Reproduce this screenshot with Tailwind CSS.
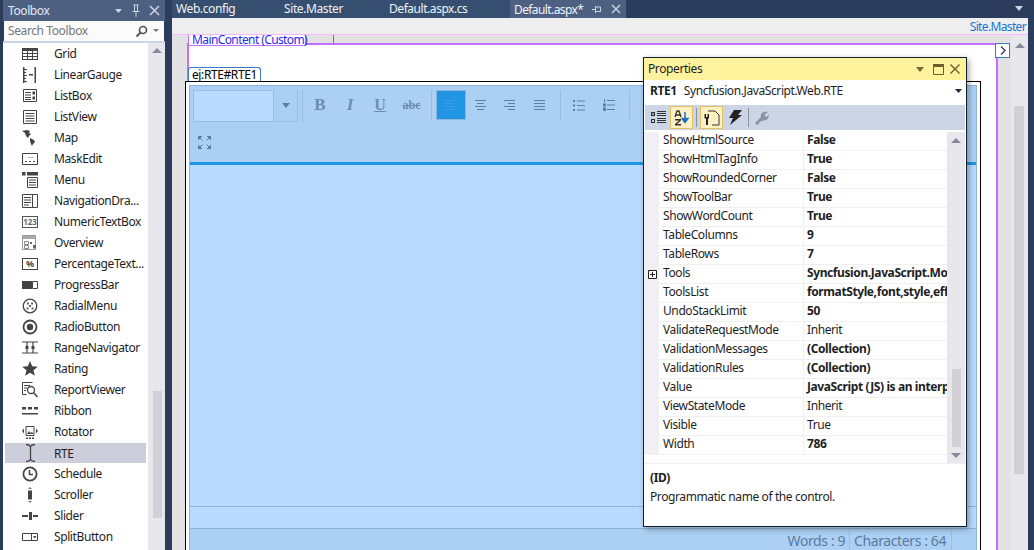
<!DOCTYPE html>
<html>
<head>
<meta charset="utf-8">
<script src="https://cdn.jsdelivr.net/npm/@tailwindcss/browser@4"></script>
</head>
<body class="m-0 w-[1034px] h-[550px] overflow-hidden bg-[#2b3c5c] font-['Noto_Sans',sans-serif] text-[12px] tracking-[-0.4px] text-[#1e1e1e]">
<div class="flex w-[1034px] h-[550px] relative">

  <!-- Toolbox -->
  <aside class="w-[162px] ml-[3px] h-full flex flex-col shrink-0">
    <div class="h-[21px] bg-[#4d6082] flex items-center pl-[5px] pr-[5px] text-[#e6eaf2]">
      <span class="flex-1 text-[12px]">Toolbox</span>
      <svg width="10" height="6" viewBox="0 0 10 6" class="mr-[7px]"><path d="M1 1h7L4.500 5z" fill="#ced4e2"/></svg>
      <svg width="10" height="14" viewBox="0 0 10 14" class="mr-[8px]"><path d="M2.500 1h5M3.500 1v6M6.500 1v6M1.500 7.500h7M5 8v5" stroke="#ced4e2" fill="none"/></svg>
      <svg width="11" height="11" viewBox="0 0 11 11"><path d="M1 1l9 9M10 1l-9 9" stroke="#ced4e2" stroke-width="1.500"/></svg>
    </div>
    <div class="h-[20px] ml-[1px] mr-[1px] bg-[#fbfbfc] flex items-center pl-[4px] pr-[4px] text-[#777]">
      <span class="flex-1 text-[12px]">Search Toolbox</span>
      <svg width="13" height="13" viewBox="0 0 13 13"><circle cx="8" cy="5" r="3.500" fill="none" stroke="#555" stroke-width="1.700"/><path d="M5.500 7.500L1.500 11.500" stroke="#555" stroke-width="2"/></svg>
      <svg width="7" height="4" viewBox="0 0 7 4" class="ml-[5px]"><path d="M0 0h6L3 3z" fill="#777"/></svg>
    </div>
    <div class="h-[2px] bg-[#ccd5e7]"></div>
    <div class="flex-1 flex bg-white overflow-hidden">
      <div class="w-[145px] pl-[1px] leading-[21px]">
        <div class="h-[21px] flex items-center"><svg class="w-[16px] h-[12px] ml-[18px] mr-[16px] shrink-0" viewBox="0 0 16 12"><path d="M0 0h16v12H0z" fill="#444"/><path d="M1 3h4v2H1zM6 3h4v2H6zM11 3h4v2h-4zM1 6h4v2H1zM6 6h4v2H6zM11 6h4v2h-4zM1 9h4v2H1zM6 9h4v2H6zM11 9h4v2h-4z" fill="#fff"/></svg>Grid</div>
        <div class="h-[21px] flex items-center"><svg class="w-[16px] h-[16px] ml-[18px] mr-[16px] shrink-0" viewBox="0 0 16 16"><path d="M1 0h1.500v16H1zM2 2h3v1H2zM2 5h2v1H2zM2 8h3v1H2zM2 11h2v1H2zM2 14h3v1H2zM7 7h4v1.500H7zM12.500 0H14v16h-1.500z" fill="#444"/></svg>LinearGauge</div>
        <div class="h-[21px] flex items-center"><svg class="w-[14px] h-[13px] ml-[19px] mr-[17px] shrink-0" viewBox="0 0 14 13"><path d="M.5.500h13v12H.5z" fill="none" stroke="#444"/><path d="M2 3h6v1H2zM2 5.500h6v1H2zM2 8h6v1H2zM2 10h6v1H2zM9.500 2.500H12v3H9.500zM9.500 7.500H12v3H9.500z" fill="#444"/></svg>ListBox</div>
        <div class="h-[21px] flex items-center"><svg class="w-[14px] h-[14px] ml-[19px] mr-[17px] shrink-0" viewBox="0 0 14 14"><path d="M.5.500h13v13H.5z" fill="none" stroke="#444"/><path d="M2.500 3h9v1h-9zM2.500 5.500h9v1h-9zM2.500 8h9v1h-9zM2.500 10.500h9v1h-9z" fill="#444"/></svg>ListView</div>
        <div class="h-[21px] flex items-center"><svg class="w-[16px] h-[16px] ml-[18px] mr-[16px] shrink-0" viewBox="0 0 16 16"><path d="M0 1l5-1 3 1-1 2 2 1-2 2-1 2-2-2-1-3zM8 8l4 2 1 2-2 2-1 2-1-2-1-3z" fill="#444"/></svg>Map</div>
        <div class="h-[21px] flex items-center"><svg class="w-[16px] h-[12px] ml-[18px] mr-[16px] shrink-0" viewBox="0 0 16 12"><path d="M.5.500h15v11H.5z" fill="none" stroke="#444"/><path d="M3 8h2v1H3zM7 8h2v1H7zM11 8h2v1h-2zM6.500 4h1v1h-1zM9.500 4h1v1h-1z" fill="#444"/></svg>MaskEdit</div>
        <div class="h-[21px] flex items-center"><svg class="w-[16px] h-[16px] ml-[18px] mr-[16px] shrink-0" viewBox="0 0 16 16"><path d="M0 0h3.500v3.500H0zM5 0h11v3.500H5z" fill="#444"/><path d="M5.500 5.500h10v10h-10z" fill="none" stroke="#444"/><path d="M7 7.500h7v1H7zM7 10h7v1H7zM7 12.500h7v1H7z" fill="#444"/></svg>Menu</div>
        <div class="h-[21px] flex items-center"><svg class="w-[16px] h-[14px] ml-[18px] mr-[16px] shrink-0" viewBox="0 0 16 14"><path d="M.5.500h15v13H.5zM10.500.500v13" fill="none" stroke="#444"/><path d="M2 3h7v1H2zM2 5.500h7v1H2zM2 8h7v1H2zM2 10.500h5v1H2z" fill="#444"/></svg>NavigationDra...</div>
        <div class="h-[21px] flex items-center"><span class="w-[16px] h-[12px] ml-[18px] mr-[16px] shrink-0 border border-[#555] flex items-center justify-center text-[8px] leading-[10px] font-bold tracking-normal text-[#666]">123</span>NumericTextBox</div>
        <div class="h-[21px] flex items-center"><svg class="w-[16px] h-[16px] ml-[18px] mr-[16px] shrink-0" viewBox="0 0 16 16"><path d="M.5.500h13v14H.5z" fill="none" stroke="#999"/><path d="M1 1h12v3H1z" fill="#aaa"/><path d="M2.500 6.500h4v3h-4zM2.500 10.500h4v3h-4z" fill="none" stroke="#888"/><path d="M8 7h2v2H8zM11 10h3v3.500h-3z" fill="#666"/></svg>Overview</div>
        <div class="h-[21px] flex items-center"><span class="w-[16px] h-[12px] ml-[18px] mr-[16px] shrink-0 border border-[#444] flex items-center justify-center text-[9px] leading-[10px] font-bold tracking-normal text-[#444]">%</span>PercentageText...</div>
        <div class="h-[21px] flex items-center"><svg class="w-[16px] h-[8px] ml-[18px] mr-[16px] shrink-0" viewBox="0 0 16 8"><path d="M0 0h10v8H0z" fill="#444"/><path d="M10.500.500h5v7h-5z" fill="none" stroke="#444"/></svg>ProgressBar</div>
        <div class="h-[21px] flex items-center"><svg class="w-[16px] h-[16px] ml-[18px] mr-[16px] shrink-0" viewBox="0 0 16 16"><circle cx="8" cy="8" r="6.800" fill="none" stroke="#444" stroke-width="1.300"/><path d="M5 4.500h2v2H5zM9 4.500h2v2H9zM7 7h2v2H7zM4.500 9.500h2v2h-2zM9.500 9.500h2v2h-2z" fill="#666"/></svg>RadialMenu</div>
        <div class="h-[21px] flex items-center"><svg class="w-[16px] h-[16px] ml-[18px] mr-[16px] shrink-0" viewBox="0 0 16 16"><circle cx="8" cy="8" r="6.500" fill="none" stroke="#444" stroke-width="1.800"/><circle cx="8" cy="8" r="3.200" fill="#444"/></svg>RadioButton</div>
        <div class="h-[21px] flex items-center"><svg class="w-[16px] h-[13px] ml-[18px] mr-[16px] shrink-0" viewBox="0 0 16 13"><path d="M0 1h16M0 12h16M5 1v11M11 1v11" stroke="#444" fill="none" stroke-width="1.200"/><path d="M3.500 5h3v3h-3zM9.500 5h3v3h-3z" fill="#444"/></svg>RangeNavigator</div>
        <div class="h-[21px] flex items-center"><svg class="w-[16px] h-[15px] ml-[18px] mr-[16px] shrink-0" viewBox="0 0 16 15"><path d="M8 0l2.200 5.300 5.600.4-4.300 3.600 1.400 5.500L8 11.800 3.100 14.800l1.400-5.500L.2 5.700l5.600-.4z" fill="#444"/></svg>Rating</div>
        <div class="h-[21px] flex items-center"><svg class="w-[16px] h-[16px] ml-[18px] mr-[16px] shrink-0" viewBox="0 0 16 16"><path d="M.5.500h10M.5.500v12h4" fill="none" stroke="#444"/><path d="M2 3h6v1H2zM2 5.500h3v1H2zM2 8h2v1H2z" fill="#444"/><circle cx="9" cy="8" r="3.500" fill="none" stroke="#444" stroke-width="1.300"/><path d="M11.500 10.500l4 4.500" stroke="#444" stroke-width="1.500"/></svg>ReportViewer</div>
        <div class="h-[21px] flex items-center"><svg class="w-[16px] h-[8px] ml-[18px] mr-[16px] shrink-0" viewBox="0 0 16 8"><path d="M0 0h4v2.500H0zM6 0h4v2.500H6zM12 0h4v2.500h-4zM0 6h16v1.500H0z" fill="#444"/></svg>Ribbon</div>
        <div class="h-[21px] flex items-center"><svg class="w-[16px] h-[16px] ml-[18px] mr-[16px] shrink-0" viewBox="0 0 16 16"><path d="M4 2.500h8v9H4z" fill="none" stroke="#444"/><path d="M5 10l2-3 1.500 2 1.500-1 1.500 2zM0 7l2-2.500v5zM16 7l-2-2.500v5zM4 13.500h2V15H4zM7 13.500h2V15H7zM10 13.500h2V15h-2z" fill="#444"/></svg>Rotator</div>
        <div class="h-[20px] mt-[1px] ml-[1px] w-[141px] bg-[#cccedb] flex items-center"><svg class="w-[9px] h-[18px] ml-[21px] mr-[19px] shrink-0" viewBox="0 0 9 18"><path d="M0 .500c2 0 3.500.5 4.500 2C5.500 1 7 .500 9 .500M4.500 2.500v13M0 17.500c2 0 3.500-.5 4.500-2 1 1.500 2.500 2 4.500 2" fill="none" stroke="#444" stroke-width="1.300"/></svg>RTE</div>
        <div class="h-[21px] flex items-center"><svg class="w-[16px] h-[16px] ml-[18px] mr-[16px] shrink-0" viewBox="0 0 16 16"><circle cx="8" cy="8" r="6.600" fill="none" stroke="#444" stroke-width="1.800"/><path d="M7.500 4v4.500H11" fill="none" stroke="#444" stroke-width="1.500"/></svg>Schedule</div>
        <div class="h-[21px] flex items-center"><svg class="w-[6px] h-[16px] ml-[23px] mr-[21px] shrink-0" viewBox="0 0 6 16"><path d="M3 0l2 2H1zM3 16l2-2H1z" fill="#777"/><path d="M1 3.500h4v9H1z" fill="#444"/></svg>Scroller</div>
        <div class="h-[21px] flex items-center"><svg class="w-[16px] h-[8px] ml-[18px] mr-[16px] shrink-0" viewBox="0 0 16 8"><path d="M0 3h6v2H0zM11 3h5v2h-5zM7 0h3v8H7z" fill="#444"/></svg>Slider</div>
        <div class="h-[21px] flex items-center"><svg class="w-[16px] h-[8px] ml-[18px] mr-[16px] shrink-0" viewBox="0 0 16 8"><path d="M.5.500h15v7H.5zM9.500.500v7" fill="none" stroke="#444"/><path d="M11 3h3.500l-1.750 2.500z" fill="#444"/></svg>SplitButton</div>
      </div>
      <div class="flex-1 bg-[#e8e8ec] relative flex flex-col items-center">
        <svg width="10" height="6" viewBox="0 0 10 6" class="mt-[5px]"><path d="M5 0l5 5H0z" fill="#868999"/></svg>
        <div class="absolute top-[348px] left-[5px] w-[9px] h-[127px] bg-[#d0d0d6]"></div>
      </div>
    </div>
  </aside>

  <div class="w-[7px] shrink-0"></div>

  <!-- Document well -->
  <main class="w-[856px] h-full shrink-0 flex flex-col">
    <div class="h-[18px] flex items-center text-[#f0f3f8] text-[12px]">
      <div class="w-[111px] h-full pl-[4px] bg-[#364e6f] leading-[17px]">Web.config</div>
      <div class="w-[106px] h-full pl-[1px] bg-[#364e6f] leading-[17px]">Site.Master</div>
      <div class="w-[121px] h-full bg-[#364e6f] leading-[17px] tracking-[-0.45px]">Default.aspx.cs</div>
      <div class="w-[116px] h-full pl-[4px] bg-[#4d6082] leading-[17px] flex items-center tracking-[-0.6px]">Default.aspx*
        <svg width="10" height="9" viewBox="0 0 10 9" class="ml-[9px]"><path d="M0 4.500h3M3.500 1v7M3.500 2h5v4.500h-5" stroke="#ced4e2" fill="none"/></svg>
        <svg width="10" height="10" viewBox="0 0 10 10" class="ml-[9px]"><path d="M1 1l8 8M9 1l-8 8" stroke="#ced4e2" stroke-width="1.400"/></svg>
      </div>
      <div class="flex-1 flex justify-end pr-[4px]"><svg width="10" height="6" viewBox="0 0 10 6"><path d="M2 0h8L6 5z" fill="#ced4e2" transform="translate(-1 0)"/></svg></div>
    </div>
    <div class="h-[16px] bg-[#eeeeee] text-right text-[#1b74d0] pr-[2px] leading-[17px] tracking-[-0.65px]">Site.Master</div>
    <div class="h-[1px] bg-[#f7b9ff]"></div>
    <div class="flex-1 flex min-h-0">
      <!-- Design surface -->
      <div class="w-[839px] bg-[#e2e2e2] relative overflow-hidden">
        <div class="h-[8px] relative">
          <div class="absolute left-[161px] top-0 h-[9px] w-[1px] bg-[#777]"></div>
        </div>
        <div class="ml-[15px] w-[811px] h-[520px] border-l-[2px] border-r-[2px] border-t-[2px] border-[#c16fff] bg-white relative">
          <div class="h-[22px]"></div>
          <div class="w-[73px] h-[14px] -ml-[1px] bg-white border border-b-0 border-[#3a78c8] rounded-t-[3px] text-black text-[12px] leading-[13px] pl-[3px]">ej:RTE#RTE1</div>
          <div class="-ml-[4px] w-[796px] h-[490px] border border-black bg-white pl-[3px] pt-[3px] pr-[3px]">
            <div class="border border-[#8fb4dc] h-full flex flex-col">
              <!-- RTE toolbar -->
              <div class="h-[76px] bg-[#acd0f3] flex flex-col shrink-0">
                <div class="flex items-start pt-[4px] pl-[3px] h-[41px]">
                  <div class="w-[81px] h-[32px] bg-[#b9dbff] border border-[#9cbde0]"></div>
                  <div class="w-[24px] h-[32px] flex items-center justify-center border-b border-r border-[#9cbde0]"><svg width="8" height="5" viewBox="0 0 8 5"><path d="M0 0h8L4 5z" fill="#5e7fa6"/></svg></div>
                  <div class="w-[1px] h-[32px] bg-[#9cbde0] ml-[4px]"></div>
                  <div class="w-[30px] h-[30px] ml-[2px] flex items-center justify-center font-['Liberation_Serif',serif] font-bold text-[17px] tracking-normal text-[#6d8db0]">B</div>
                  <div class="w-[30px] h-[30px] flex items-center justify-center font-['Liberation_Serif',serif] italic font-bold text-[17px] tracking-normal text-[#6d8db0]">I</div>
                  <div class="w-[30px] h-[30px] flex items-center justify-center font-['Liberation_Serif',serif] underline font-bold text-[16px] tracking-normal text-[#6d8db0]">U</div>
                  <div class="w-[33px] h-[30px] flex items-center justify-center font-['Liberation_Serif',serif] line-through font-bold text-[12px] tracking-normal text-[#6d8db0]">abc</div>
                  <div class="w-[1px] h-[30px] bg-[#9cbde0] ml-[3px]"></div>
                  <div class="w-[30px] h-[30px] ml-[4px] bg-[#1f95e3] border border-[#8fb4dc] flex items-center justify-center"><svg width="12" height="11" viewBox="0 0 12 11"><path d="M0 .500h12M0 3.500h8M0 6.500h12M0 9.500h8" stroke="#3d9de4"/></svg></div>
                  <div class="w-[28px] h-[30px] flex items-center justify-center"><svg width="11" height="11" viewBox="0 0 11 11"><path d="M0 .500h11M2 3.500h7M0 6.500h11M2 9.500h7" stroke="#5e7fa6"/></svg></div>
                  <div class="w-[30px] h-[30px] flex items-center justify-center"><svg width="11" height="11" viewBox="0 0 11 11"><path d="M0 .500h11M4 3.500h7M0 6.500h11M4 9.500h7" stroke="#5e7fa6"/></svg></div>
                  <div class="w-[30px] h-[30px] flex items-center justify-center"><svg width="11" height="11" viewBox="0 0 11 11"><path d="M0 .500h11M0 3.500h11M0 6.500h11M0 9.500h11" stroke="#5e7fa6"/></svg></div>
                  <div class="w-[1px] h-[30px] bg-[#9cbde0] ml-[6px]"></div>
                  <div class="w-[30px] h-[30px] ml-[3px] flex items-center justify-center"><svg width="12" height="11" viewBox="0 0 12 11"><path d="M0 0h2v2H0zM0 4.500h2v2H0zM0 9h2v2H0z" fill="#5e7fa6"/><path d="M4 1h8M4 5.500h8M4 10h8" stroke="#5e7fa6"/></svg></div>
                  <div class="w-[30px] h-[30px] flex items-center justify-center"><svg width="12" height="12" viewBox="0 0 12 12"><path d="M1 0h1v3.500H1zM0 4.500h3v3H0zM0 8.500h3V12H0z" fill="#5e7fa6"/><path d="M4 1.500h8M4 6h8M4 10.500h8" stroke="#5e7fa6"/></svg></div>
                  <div class="w-[1px] h-[30px] bg-[#9cbde0] ml-[5px]"></div>
                </div>
                <div class="pl-[8px] pt-[9px]"><svg width="13" height="13" viewBox="0 0 13 13"><path d="M0 0h4L0 4zM13 0H9l4 4zM0 13h4l-4-4zM13 13H9l4-4zM2 2l2.500 2.500M11 2L8.500 4.500M2 11l2.500-2.500M11 11L8.500 8.500" fill="#5e7fa6" stroke="#5e7fa6"/></svg></div>
              </div>
              <div class="h-[3px] bg-[#1f95e3] shrink-0"></div>
              <div class="h-[342px] bg-[#b9dbff] border-b border-[#8fb4dc] shrink-0"></div>
              <div class="h-[22px] bg-[#b9dbff] border-b border-[#8fb4dc] shrink-0"></div>
              <div class="h-[22px] shrink-0 bg-[#acd0f3] flex justify-end items-center text-[14px] text-[#5c7a9e] pr-[24px]">
                <span>Words : 9</span>
                <span class="w-[1px] h-[20px] bg-[#9cbde0] mx-[4px]"></span>
                <span>Characters : 64</span>
                <span class="w-[1px] h-[20px] bg-[#9cbde0] ml-[5px]"></span>
              </div>
            </div>
          </div>
        </div>
        <!-- MainContent tab -->
        <div class="absolute left-[16px] top-0 w-[118px] h-[11px] bg-white border border-t-0 border-[#c16fff] text-[#2a2af0] text-[12px] leading-[9px] pl-[3px] whitespace-nowrap tracking-[-0.6px]">MainContent (Custom)</div>
        <!-- Chevron -->
        <div class="absolute left-[823px] top-[8px] w-[15px] h-[15px] bg-white border border-[#3a78c8] flex items-center justify-center"><svg width="6" height="9" viewBox="0 0 6 9"><path d="M1 .500l4 4-4 4" fill="none" stroke="#2b3c5c" stroke-width="1.300"/></svg></div>
      </div>
      <!-- Main scrollbar -->
      <div class="flex-1 bg-[#e8e8ec] relative flex flex-col items-center">
        <svg width="10" height="6" viewBox="0 0 10 6" class="mt-[8px]"><path d="M5 0l5 5H0z" fill="#868999"/></svg>
        <div class="absolute top-[71px] left-[3px] w-[10px] h-[368px] bg-[#d0d0d6]"></div>
      </div>
    </div>
  </main>

  <!-- Properties floating window -->
  <section class="absolute left-[643px] top-[57px] w-[324px] h-[470px] border border-[#10202e] bg-white shadow-[2px_2px_6px_rgba(0,0,0,0.35)] flex flex-col">
    <div class="h-[22px] bg-[#fff29d] flex items-center pl-[4px] pr-[6px] shrink-0">
      <span class="flex-1">Properties</span>
      <svg width="9" height="5" viewBox="0 0 9 5" class="mr-[8px]"><path d="M0 0h8L4 5z" fill="#7a6a3a"/></svg>
      <svg width="11" height="11" viewBox="0 0 11 11" class="mr-[6px]"><path d="M.5 2.500h10v8H.5z" fill="none" stroke="#6b5c30"/><path d="M0 0h11v2.500H0z" fill="#6b5c30"/></svg>
      <svg width="10" height="10" viewBox="0 0 10 10"><path d="M.5.500l9 9M9.500.500l-9 9" stroke="#6b5c30" stroke-width="1.400"/></svg>
    </div>
    <div class="h-[25px] flex items-center pl-[6px] pr-[4px] pb-[3px] shrink-0 text-[12px]">
      <span class="font-bold mr-[7px]">RTE1</span><span class="flex-1">Syncfusion.JavaScript.Web.RTE</span>
      <svg width="7" height="4" viewBox="0 0 7 4"><path d="M0 0h7L3.500 4z" fill="#1e2a44"/></svg>
    </div>
    <div class="h-[25px] mx-[1px] bg-[#ccd5e5] flex items-center shrink-0">
      <div class="w-[25px] flex justify-center pl-[2px]"><svg width="15" height="13" viewBox="0 0 15 13"><path d="M0 1h4v4H0zM0 8h4v4H0z" fill="#333"/><path d="M1 3h2M1 10h2M2 9v2" stroke="#fff"/><path d="M6 .500h9M6 2.500h9M6 4.500h9M6 7.500h9M6 9.500h9M6 11.500h9" stroke="#333"/></svg></div>
      <div class="w-[23px] h-[23px] bg-[#fdf0c2] border border-[#e5c365] flex items-center justify-center"><svg width="16" height="16" viewBox="0 0 16 16"><path d="M1 7L3 1h2l2 6M2 5h4" fill="none" stroke="#333" stroke-width="1.300"/><path d="M1 9h6v1.500L3 14h4v1.500H1V14l4-3.500H1z" fill="#333"/><path d="M11 2v9M8 8.500l3 4 3-4z" fill="#1f6fc4" stroke="#1f6fc4" stroke-width="1.500"/></svg></div>
      <div class="w-[1px] h-[19px] bg-[#8c93a3] mx-[3px]"></div>
      <div class="w-[23px] h-[23px] bg-[#fdf0c2] border border-[#e5c365] flex items-center justify-center"><svg width="16" height="16" viewBox="0 0 16 16"><path d="M4 1h7l4 4v10H8" fill="none" stroke="#333"/><path d="M2 4v3h1.500V4H5v4L4 9v6H2V9L.5 8V4z" fill="#222"/></svg></div>
      <div class="w-[20px] flex justify-center ml-[2px]"><svg width="13" height="15" viewBox="0 0 13 15"><path d="M5 0h8L9 5h4L1 15l3-7H0z" fill="#222"/></svg></div>
      <div class="w-[1px] h-[19px] bg-[#8c93a3] mx-[3px]"></div>
      <div class="w-[20px] flex justify-center"><svg width="14" height="14" viewBox="0 0 14 14"><path d="M0 12l6-6C5 3 8 0 13 1L9.500 3.500 11 6l3-2c0 4-4 6.500-7 5.500L2 14z" fill="#8c93a3"/></svg></div>
    </div>
    <div class="h-[2px] shrink-0"></div>
    <!-- Property grid -->
    <div class="h-[332px] flex shrink-0 border-b border-[#f0f0f0] ">
      <div class="w-[303px] flex flex-col">
        <div class="flex h-[19px] shrink-0 leading-[15px]"><span class="w-[15px] bg-[#f0f0f4] shrink-0"></span><span class="w-[145px] pl-[4px] border-r border-b border-[#f0f0f0]">ShowHtmlSource</span><span class="flex-1 pl-[3px] font-bold border-b border-[#f0f0f0] overflow-hidden whitespace-nowrap">False</span></div>
        <div class="flex h-[19px] shrink-0 leading-[15px]"><span class="w-[15px] bg-[#f0f0f4] shrink-0"></span><span class="w-[145px] pl-[4px] border-r border-b border-[#f0f0f0]">ShowHtmlTagInfo</span><span class="flex-1 pl-[3px] font-bold border-b border-[#f0f0f0] overflow-hidden whitespace-nowrap">True</span></div>
        <div class="flex h-[19px] shrink-0 leading-[15px]"><span class="w-[15px] bg-[#f0f0f4] shrink-0"></span><span class="w-[145px] pl-[4px] border-r border-b border-[#f0f0f0]">ShowRoundedCorner</span><span class="flex-1 pl-[3px] font-bold border-b border-[#f0f0f0] overflow-hidden whitespace-nowrap">False</span></div>
        <div class="flex h-[19px] shrink-0 leading-[15px]"><span class="w-[15px] bg-[#f0f0f4] shrink-0"></span><span class="w-[145px] pl-[4px] border-r border-b border-[#f0f0f0]">ShowToolBar</span><span class="flex-1 pl-[3px] font-bold border-b border-[#f0f0f0] overflow-hidden whitespace-nowrap">True</span></div>
        <div class="flex h-[19px] shrink-0 leading-[15px]"><span class="w-[15px] bg-[#f0f0f4] shrink-0"></span><span class="w-[145px] pl-[4px] border-r border-b border-[#f0f0f0]">ShowWordCount</span><span class="flex-1 pl-[3px] font-bold border-b border-[#f0f0f0] overflow-hidden whitespace-nowrap">True</span></div>
        <div class="flex h-[19px] shrink-0 leading-[15px]"><span class="w-[15px] bg-[#f0f0f4] shrink-0"></span><span class="w-[145px] pl-[4px] border-r border-b border-[#f0f0f0]">TableColumns</span><span class="flex-1 pl-[3px] font-bold border-b border-[#f0f0f0] overflow-hidden whitespace-nowrap">9</span></div>
        <div class="flex h-[19px] shrink-0 leading-[15px]"><span class="w-[15px] bg-[#f0f0f4] shrink-0"></span><span class="w-[145px] pl-[4px] border-r border-b border-[#f0f0f0]">TableRows</span><span class="flex-1 pl-[3px] font-bold border-b border-[#f0f0f0] overflow-hidden whitespace-nowrap">7</span></div>
        <div class="flex h-[19px] shrink-0 leading-[15px]"><span class="w-[15px] bg-[#f0f0f4] shrink-0 flex items-center justify-center"><svg width="9" height="9" viewBox="0 0 9 9" class="ml-[1px]"><path d="M.5.500h8v8h-8zM2 4.500h5M4.500 2v5" fill="#fff" stroke="#222"/></svg></span><span class="w-[145px] pl-[4px] border-r border-b border-[#f0f0f0]">Tools</span><span class="flex-1 pl-[3px] font-bold border-b border-[#f0f0f0] overflow-hidden whitespace-nowrap">Syncfusion.JavaScript.Mo</span></div>
        <div class="flex h-[19px] shrink-0 leading-[15px]"><span class="w-[15px] bg-[#f0f0f4] shrink-0"></span><span class="w-[145px] pl-[4px] border-r border-b border-[#f0f0f0]">ToolsList</span><span class="flex-1 pl-[3px] font-bold border-b border-[#f0f0f0] overflow-hidden whitespace-nowrap">formatStyle,font,style,eff</span></div>
        <div class="flex h-[19px] shrink-0 leading-[15px]"><span class="w-[15px] bg-[#f0f0f4] shrink-0"></span><span class="w-[145px] pl-[4px] border-r border-b border-[#f0f0f0]">UndoStackLimit</span><span class="flex-1 pl-[3px] font-bold border-b border-[#f0f0f0] overflow-hidden whitespace-nowrap">50</span></div>
        <div class="flex h-[19px] shrink-0 leading-[15px]"><span class="w-[15px] bg-[#f0f0f4] shrink-0"></span><span class="w-[145px] pl-[4px] border-r border-b border-[#f0f0f0]">ValidateRequestMode</span><span class="flex-1 pl-[3px] border-b border-[#f0f0f0] overflow-hidden whitespace-nowrap">Inherit</span></div>
        <div class="flex h-[19px] shrink-0 leading-[15px]"><span class="w-[15px] bg-[#f0f0f4] shrink-0"></span><span class="w-[145px] pl-[4px] border-r border-b border-[#f0f0f0]">ValidationMessages</span><span class="flex-1 pl-[3px] font-bold border-b border-[#f0f0f0] overflow-hidden whitespace-nowrap">(Collection)</span></div>
        <div class="flex h-[19px] shrink-0 leading-[15px]"><span class="w-[15px] bg-[#f0f0f4] shrink-0"></span><span class="w-[145px] pl-[4px] border-r border-b border-[#f0f0f0]">ValidationRules</span><span class="flex-1 pl-[3px] font-bold border-b border-[#f0f0f0] overflow-hidden whitespace-nowrap">(Collection)</span></div>
        <div class="flex h-[19px] shrink-0 leading-[15px]"><span class="w-[15px] bg-[#f0f0f4] shrink-0"></span><span class="w-[145px] pl-[4px] border-r border-b border-[#f0f0f0]">Value</span><span class="flex-1 pl-[3px] font-bold border-b border-[#f0f0f0] overflow-hidden whitespace-nowrap">JavaScript (JS) is an interp</span></div>
        <div class="flex h-[19px] shrink-0 leading-[15px]"><span class="w-[15px] bg-[#f0f0f4] shrink-0"></span><span class="w-[145px] pl-[4px] border-r border-b border-[#f0f0f0]">ViewStateMode</span><span class="flex-1 pl-[3px] border-b border-[#f0f0f0] overflow-hidden whitespace-nowrap">Inherit</span></div>
        <div class="flex h-[19px] shrink-0 leading-[15px]"><span class="w-[15px] bg-[#f0f0f4] shrink-0"></span><span class="w-[145px] pl-[4px] border-r border-b border-[#f0f0f0]">Visible</span><span class="flex-1 pl-[3px] border-b border-[#f0f0f0] overflow-hidden whitespace-nowrap">True</span></div>
        <div class="flex h-[19px] shrink-0 leading-[15px]"><span class="w-[15px] bg-[#f0f0f4] shrink-0"></span><span class="w-[145px] pl-[4px] border-r border-b border-[#f0f0f0]">Width</span><span class="flex-1 pl-[3px] font-bold border-b border-[#f0f0f0] overflow-hidden whitespace-nowrap">786</span></div>
      </div>
      <div class="w-[18px] bg-[#e8e8ec] relative flex flex-col items-center">
        <svg width="10" height="6" viewBox="0 0 10 6" class="mt-[6px]"><path d="M5 0l5 5H0z" fill="#868999"/></svg>
        <div class="absolute top-[237px] left-[5px] w-[9px] h-[78px] bg-[#d0d0d6]"></div>
        <svg width="10" height="6" viewBox="0 0 10 6" class="absolute bottom-[4px] left-[4px]"><path d="M0 0h10L5 5z" fill="#868999"/></svg>
      </div>
    </div>
    <div class="pl-[6px] pt-[4px] leading-[19px]">
      <div class="font-bold">(ID)</div>
      <div>Programmatic name of the control.</div>
    </div>
  </section>
</div>
</body>
</html>
